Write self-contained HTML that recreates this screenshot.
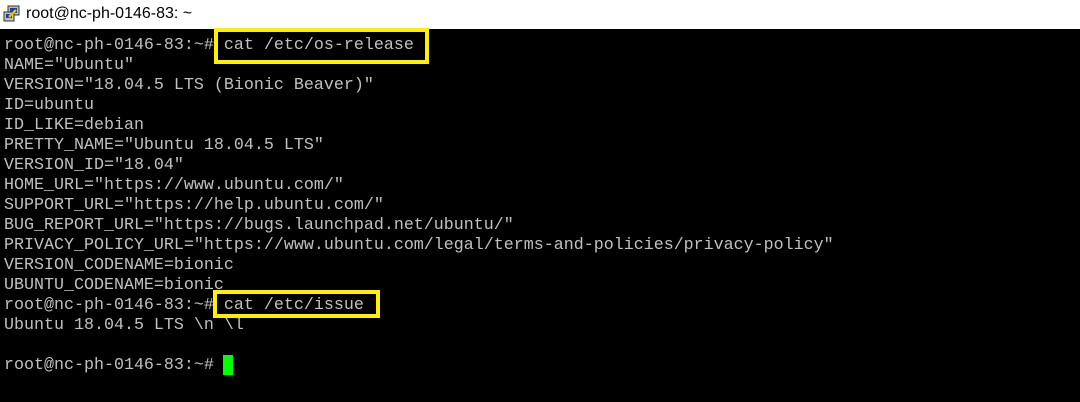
<!DOCTYPE html>
<html><head><style>
body{margin:0;width:1080px;height:402px;background:#000;overflow:hidden;position:relative}
.title{position:absolute;left:0;top:0;width:1080px;height:29px;background:#fff;font-family:"Liberation Sans",sans-serif;font-size:16px;color:#000}
.title span{position:absolute;left:26px;top:5px}
.term{position:absolute;left:4px;top:36px;font-family:"Liberation Mono",monospace;font-size:16.67px;line-height:20px;color:#c0c0c0;white-space:pre}
.box{position:absolute;border:4px solid #fff000;box-sizing:border-box}
.cur{position:absolute;left:223px;top:355px;width:10px;height:20px;background:#00ff00}
</style></head><body>
<div class="title">
<svg style="position:absolute;left:3px;top:5px" width="18" height="18" viewBox="0 0 18 18">
<rect x="5" y="1" width="11" height="9" fill="#c0c0c0" stroke="#333"/><rect x="7" y="3" width="7" height="5" fill="#1a3fa0"/>
<rect x="1" y="7" width="10" height="9" fill="#c0c0c0" stroke="#333"/><rect x="3" y="9" width="6" height="4" fill="#1a3fa0"/>
<path d="M6 12 L13 5" stroke="#e8c000" stroke-width="2.5"/></svg>
<span>root@nc-ph-0146-83: ~</span></div>
<div class="term">root@nc-ph-0146-83:~# cat /etc/os-release
NAME="Ubuntu"
VERSION="18.04.5 LTS (Bionic Beaver)"
ID=ubuntu
ID_LIKE=debian
PRETTY_NAME="Ubuntu 18.04.5 LTS"
VERSION_ID="18.04"
HOME_URL="https://www.ubuntu.com/"
SUPPORT_URL="https://help.ubuntu.com/"
BUG_REPORT_URL="https://bugs.launchpad.net/ubuntu/"
PRIVACY_POLICY_URL="https://www.ubuntu.com/legal/terms-and-policies/privacy-policy"
VERSION_CODENAME=bionic
UBUNTU_CODENAME=bionic
root@nc-ph-0146-83:~# cat /etc/issue
Ubuntu 18.04.5 LTS \n \l

root@nc-ph-0146-83:~# </div>
<div class="box" style="left:214px;top:28px;width:215px;height:36px"></div>
<div class="box" style="left:213px;top:290px;width:167px;height:28px"></div>
<div class="cur"></div>
</body></html>
